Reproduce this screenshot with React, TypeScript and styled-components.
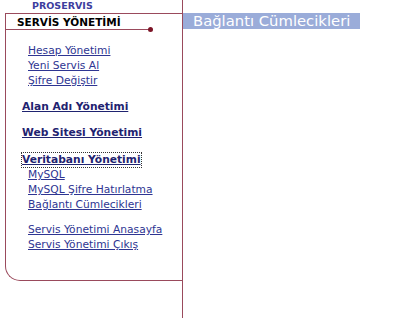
import { createGlobalStyle } from "styled-components";
import styled from "styled-components";

const GlobalStyle = createGlobalStyle`
  html, body {
    margin: 0;
    padding: 0;
    background: #ffffff;
  }
  body {
    font-family: "DejaVu Sans", Verdana, sans-serif;
  }
`;

const LINE = "#9a4a5c";

const Page = styled.div`
  display: flex;
  height: 100vh;
  min-height: 318px;
`;

const Sidebar = styled.aside`
  width: 182px;
  flex-shrink: 0;
  border-right: 1px solid ${LINE};
  display: flex;
  flex-direction: column;
`;

const Brand = styled.div`
  height: 13px;
  padding-left: 32px;
  font-size: 9.5px;
  font-weight: bold;
  line-height: 11px;
  color: #3d3d9e;
`;

const MenuBox = styled.nav`
  margin-left: 5px;
  height: 266px;
  border-top: 1px solid ${LINE};
  border-left: 1px solid ${LINE};
  border-bottom: 1px solid ${LINE};
  border-bottom-left-radius: 15px;
  padding-left: 16px;
  font-size: 10.6px;
`;

const Header = styled.div`
  position: relative;
  margin-left: -16px;
  width: 133px;
  height: 15px;
  padding-left: 11px;
  border-bottom: 1px solid ${LINE};
  font-size: 10.5px;
  font-weight: bold;
  line-height: 16px;
  color: #000;

  &::after {
    content: "";
    position: absolute;
    right: -3px;
    bottom: -3px;
    width: 5px;
    height: 5px;
    border-radius: 50%;
    background: #7c1426;
  }
`;

const LinkList = styled.ul<{ $top: number }>`
  list-style: none;
  margin: ${(p) => p.$top}px 0 0 6px;
  padding: 0;
`;

const Item = styled.li`
  line-height: 15px;
  height: 15px;
`;

const SubLink = styled.a`
  font-size: 10.7px;
  color: #2e3592;
  text-decoration: underline;
  white-space: nowrap;
`;

const Heading = styled.a<{ $top: number; $focused?: boolean }>`
  display: block;
  width: max-content;
  margin-top: ${(p) => p.$top}px;
  line-height: 14px;
  height: 14px;
  font-size: 10.7px;
  font-weight: bold;
  color: #1f2370;
  text-decoration: underline;
  white-space: nowrap;
  outline: ${(p) => (p.$focused ? "1px dotted #333" : "none")};
  outline-offset: 0;
`;

const Main = styled.main`
  flex: 1;
  padding-top: 13px;
`;

const TitleBar = styled.div`
  width: 167px;
  height: 16px;
  padding-left: 10px;
  background: #9aacd9;
  color: #ffffff;
  font-size: 14.8px;
  line-height: 16px;
  white-space: nowrap;
  overflow: hidden;
`;

const account = ["Hesap Yönetimi", "Yeni Servis Al", "Şifre Değiştir"];
const database = ["MySQL", "MySQL Şifre Hatırlatma", "Bağlantı Cümlecikleri"];
const footer = ["Servis Yönetimi Anasayfa", "Servis Yönetimi Çıkış"];

function App() {
  return (
    <>
      <GlobalStyle />
      <Page>
        <Sidebar>
          <Brand>PROSERVIS</Brand>
          <MenuBox>
            <Header>SERVİS YÖNETİMİ</Header>
            <LinkList $top={13}>
              {account.map((label) => (
                <Item key={label}>
                  <SubLink href="#">{label}</SubLink>
                </Item>
              ))}
            </LinkList>
            <Heading href="#" $top={12}>
              Alan Adı Yönetimi
            </Heading>
            <Heading href="#" $top={12}>
              Web Sitesi Yönetimi
            </Heading>
            <Heading href="#" $top={13} $focused>
              Veritabanı Yönetimi
            </Heading>
            <LinkList $top={0}>
              {database.map((label) => (
                <Item key={label}>
                  <SubLink href="#">{label}</SubLink>
                </Item>
              ))}
            </LinkList>
            <LinkList $top={10}>
              {footer.map((label) => (
                <Item key={label}>
                  <SubLink href="#">{label}</SubLink>
                </Item>
              ))}
            </LinkList>
          </MenuBox>
        </Sidebar>
        <Main>
          <TitleBar>Bağlantı Cümlecikleri</TitleBar>
        </Main>
      </Page>
    </>
  );
}

export default App;
